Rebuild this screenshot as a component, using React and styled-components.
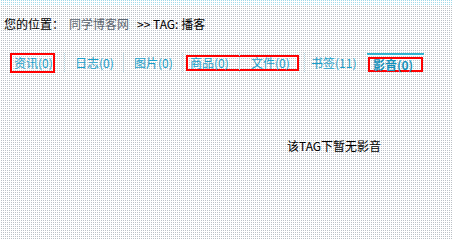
import React from "react";
import styled, { createGlobalStyle } from "styled-components";

const GlobalStyle = createGlobalStyle`
  html, body {
    margin: 0;
    padding: 0;
  }
  body {
    background-color: #ffffff;
    background-image: conic-gradient(from 90deg at 1px 1px, #ffffff 0 75%, #bcc1c7 0);
    background-size: 2px 2px;
    font-family: "Noto Sans CJK SC", "DejaVu Sans", sans-serif;
    font-size: 12px;
    color: #000000;
  }
`;

const Page = styled.div`
  width: 452px;
  height: 209px;
  overflow: hidden;
`;

const TopStrip = styled.div`
  height: 5px;
  background-image: conic-gradient(from 90deg at 1px 1px, #ffffff 0 75%, #9fd9ea 0);
  background-size: 2px 2px;
`;

const Breadcrumb = styled.div`
  display: flex;
  align-items: center;
  height: 14px;
  margin-top: 12px;
  padding-left: 4px;
  line-height: 14px;
  white-space: nowrap;
`;

const CrumbLabel = styled.span`
  margin-right: 5px;
`;

const CrumbLink = styled.a`
  color: #5b6570;
  text-decoration: none;
  margin-right: 8px;
`;

const TabRow = styled.div`
  display: flex;
  align-items: center;
  height: 22px;
  margin-top: 21px;
  padding-left: 10px;
  white-space: nowrap;
`;

const Tab = styled.a`
  display: inline-block;
  flex-shrink: 0;
  box-sizing: content-box;
  width: ${(p) => p.$w || "38px"};
  height: 14px;
  padding: ${(p) => p.$pad || "0 10px"};
  color: ${(p) => (p.$active ? "#1592bb" : "#1a9fca")};
  text-decoration: none;
  font-weight: ${(p) => (p.$active ? 700 : 400)};
  line-height: 14px;
`;

const Sep = styled.span`
  flex-shrink: 0;
  width: 1px;
  height: 20px;
  margin-left: ${(p) => p.$left || "0"};
  background-image: linear-gradient(#b9dde8 50%, transparent 50%);
  background-size: 1px 2px;
`;

const Mark = styled.span`
  display: inline-flex;
  align-items: center;
  flex-shrink: 0;
  height: ${(p) => p.$h || "16px"};
  padding: 0 ${(p) => p.$right || "1px"} 0 ${(p) => p.$left || "2px"};
  border: 2px solid #ff0000;
  margin-left: ${(p) => p.$margin || "0"};
`;

const ActiveTab = styled.div`
  display: flex;
  align-items: flex-end;
  align-self: flex-start;
  flex-shrink: 0;
  height: 17px;
  margin-top: 1px;
  margin-left: 12px;
  padding: 0 1px;
  border-top: 2px solid #2fb5d0;
`;

const Message = styled.div`
  margin-top: 65px;
  padding-left: 287px;
  line-height: 14px;
  white-space: nowrap;
`;

export default function App() {
  return (
    <Page>
      <GlobalStyle />
      <TopStrip />
      <Breadcrumb>
        <CrumbLabel>您的位置：</CrumbLabel>
        <CrumbLink href="#">同学博客网</CrumbLink>
        <span>&gt;&gt; TAG: 播客</span>
      </Breadcrumb>
      <TabRow>
        <Mark>
          <Tab $pad="0">资讯(0)</Tab>
        </Mark>
        <Sep $left="9px" />
        <Tab>日志(0)</Tab>
        <Sep />
        <Tab>图片(0)</Tab>
        <Sep />
        <Mark $margin="3px" $h="12px" $right="8px">
          <Tab $pad="0">商品(0)</Tab>
          <Sep $left="11px" />
          <Tab $pad="0 0 0 11px">文件(0)</Tab>
        </Mark>
        <Sep $left="5px" />
        <Tab $pad="0 0 0 6px" $w="44px">
          书签(11)
        </Tab>
        <ActiveTab>
          <Mark $h="11px" $left="3px" $right="8px">
            <Tab $pad="0" $w="40px" $active>
              影音(0)
            </Tab>
          </Mark>
        </ActiveTab>
      </TabRow>
      <Message>该TAG下暂无影音</Message>
    </Page>
  );
}
